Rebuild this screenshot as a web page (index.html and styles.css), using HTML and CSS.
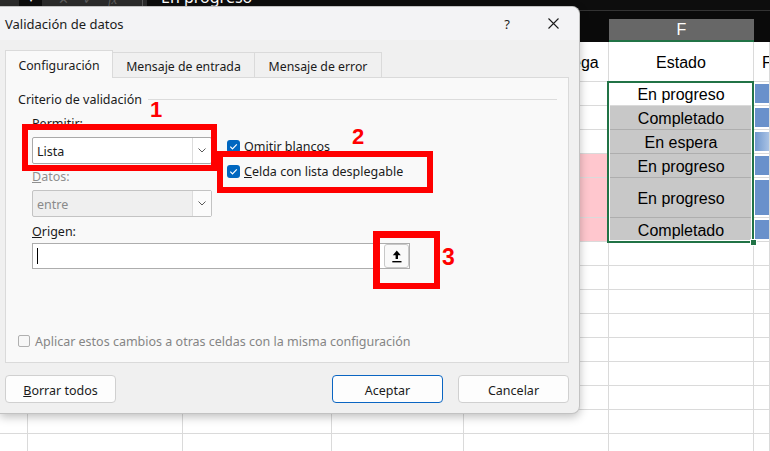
FILE: index.html
```html
<!DOCTYPE html>
<html lang="es">
<head>
<meta charset="utf-8">
<title>Validación de datos</title>
<link rel="stylesheet" href="styles.css">
</head>
<body>
<div class="page">
  <div class="sheet">
    <div class="fbar">
      <div class="fbar-name"><span>▾</span></div>
      <div class="fbar-icons"><span>✕</span><span>✓</span><span class="fx">fx</span></div>
      <div class="fbar-input"><span class="fbar-text">En progreso</span></div>
    </div>
    <div class="colheads">
      <div class="ch"></div><div class="ch"></div><div class="ch"></div><div class="ch"></div><div class="ch"></div>
      <div class="ch ch-sel">F</div>
      <div class="ch"></div>
    </div>
    <div class="grid">
      <div class="c"></div><div class="c"></div><div class="c"></div><div class="c"></div><div class="c">Fecha de entrega</div><div class="c">Estado</div><div class="c gh">Fecha de inicio</div>

      <div class="c"></div><div class="c"></div><div class="c"></div><div class="c"></div><div class="c"></div><div class="c">En progreso</div><div class="c g"><span class="bar"></span></div>
      <div class="c"></div><div class="c"></div><div class="c"></div><div class="c"></div><div class="c"></div><div class="c sel">Completado</div><div class="c g"><span class="bar"></span></div>
      <div class="c"></div><div class="c"></div><div class="c"></div><div class="c"></div><div class="c"></div><div class="c sel">En espera</div><div class="c g"><span class="bar fade"></span></div>
      <div class="c"></div><div class="c"></div><div class="c"></div><div class="c"></div><div class="c pink"></div><div class="c sel">En progreso</div><div class="c g"><span class="bar"></span></div>
      <div class="c"></div><div class="c"></div><div class="c"></div><div class="c"></div><div class="c pink"></div><div class="c sel">En progreso</div><div class="c g"><span class="bar"></span></div>
      <div class="c"></div><div class="c"></div><div class="c"></div><div class="c"></div><div class="c pink"></div><div class="c sel">Completado</div><div class="c g"><span class="bar"></span></div>

      <div class="c"></div><div class="c"></div><div class="c"></div><div class="c"></div><div class="c"></div><div class="c"></div><div class="c"></div>
      <div class="c"></div><div class="c"></div><div class="c"></div><div class="c"></div><div class="c"></div><div class="c"></div><div class="c"></div>
      <div class="c"></div><div class="c"></div><div class="c"></div><div class="c"></div><div class="c"></div><div class="c"></div><div class="c"></div>
      <div class="c"></div><div class="c"></div><div class="c"></div><div class="c"></div><div class="c"></div><div class="c"></div><div class="c"></div>
      <div class="c"></div><div class="c"></div><div class="c"></div><div class="c"></div><div class="c"></div><div class="c"></div><div class="c"></div>
      <div class="c"></div><div class="c"></div><div class="c"></div><div class="c"></div><div class="c"></div><div class="c"></div><div class="c"></div>
      <div class="c"></div><div class="c"></div><div class="c"></div><div class="c"></div><div class="c"></div><div class="c"></div><div class="c"></div>
      <div class="c"></div><div class="c"></div><div class="c"></div><div class="c"></div><div class="c"></div><div class="c"></div><div class="c"></div>
      <div class="c"></div><div class="c"></div><div class="c"></div><div class="c"></div><div class="c"></div><div class="c"></div><div class="c"></div>
    </div>
  </div>

  <div class="selection"><span class="handle"></span></div>

  <div class="dialog">
    <div class="titlebar">
      <span class="title">Validación de datos</span>
      <span class="tb-btn">?</span>
      <span class="tb-btn tb-close">
        <svg width="11" height="11" viewBox="0 0 11 11"><path d="M0.5 0.5 L10.5 10.5 M10.5 0.5 L0.5 10.5" stroke="#1b1b1b" stroke-width="1.1" fill="none"/></svg>
      </span>
    </div>
    <div class="dbody">
      <div class="tabs">
        <div class="tab active">Configuración</div>
        <div class="tab t2">Mensaje de entrada</div>
        <div class="tab t3">Mensaje de error</div>
      </div>
      <div class="panel">
        <div class="legend"><span>Criterio de validación</span><span class="rule"></span></div>
        <div class="form">
          <div class="lbl"><u>P</u>ermitir:</div>
          <div class="combo">
            <span class="val">Lista</span>
            <span class="drop"><svg width="8" height="5" viewBox="0 0 8 5"><path d="M0.5 0.5 L4 4 L7.5 0.5" stroke="#5a5a5a" stroke-width="1" fill="none"/></svg></span>
          </div>
          <div class="lbl dis"><u>D</u>atos:</div>
          <div class="combo dis">
            <span class="val">entre</span>
            <span class="drop"><svg width="8" height="5" viewBox="0 0 8 5"><path d="M0.5 0.5 L4 4 L7.5 0.5" stroke="#5a5a5a" stroke-width="1" fill="none"/></svg></span>
          </div>
          <div class="checks">
            <div class="chk"><span class="box on"><svg width="13" height="13" viewBox="0 0 13 13"><path d="M3.3 6.7 L5.5 8.9 L9.8 4.4" stroke="#fff" stroke-width="1.2" fill="none"/></svg></span><span>Omitir blancos</span></div>
            <div class="chk"><span class="box on"><svg width="13" height="13" viewBox="0 0 13 13"><path d="M3.3 6.7 L5.5 8.9 L9.8 4.4" stroke="#fff" stroke-width="1.2" fill="none"/></svg></span><span><u>C</u>elda con lista desplegable</span></div>
          </div>
        </div>
        <div class="lbl origen"><u>O</u>rigen:</div>
        <div class="refinput">
          <span class="caret"></span>
          <span class="refbtn"><svg width="10" height="13" viewBox="0 0 10 13"><path d="M0.8 5.2 L4.8 0.5 L8.8 5.2 Z" fill="#000"/><rect x="3.6" y="5" width="2.4" height="4" fill="#000"/><rect x="0.3" y="11" width="9.2" height="1.4" fill="#000"/></svg></span>
        </div>
        <div class="apply"><span class="box off"></span><span>Aplicar estos cambios a otras celdas con la misma configuración</span></div>
      </div>
      <div class="btnrow">
        <button class="btn"><u>B</u>orrar todos</button>
        <div class="btngroup">
          <button class="btn primary">Aceptar</button>
          <button class="btn">Cancelar</button>
        </div>
      </div>
    </div>
  </div>

  <div class="mark m1"></div>
  <div class="mark m2"></div>
  <div class="mark m3"></div>
  <span class="num n1">1</span>
  <span class="num n2">2</span>
  <span class="num n3">3</span>
</div>
</body>
</html>
```

FILE: styles.css
```css
* { box-sizing: border-box; margin: 0; padding: 0; }
html, body { width: 770px; height: 451px; overflow: hidden; background: #fff; }
body { font-family: "Liberation Sans", Arial, sans-serif; }
.page { position: relative; width: 770px; height: 451px; overflow: hidden; }

/* formula bar */
.fbar { height: 10px; display: flex; background: #2b2b2b; overflow: hidden; }
.fbar-name { width: 23px; margin-left: 19px; background: #0d0d0d; color: #fff; font-size: 12px; text-align: center; }
.fbar-name span { display: block; margin-top: -9px; }
.fbar-icons { width: 101px; display: flex; gap: 14px; padding-left: 16px; color: #5d5d5d; font-size: 13px; border-right: 1px solid #5a5a5a; margin-right: 4px; }
.fbar-icons span { display: block; margin-top: -8px; }
.fbar-icons .fx { font-style: italic; font-family: "Liberation Serif", serif; }
.fbar-input { flex: 1; background: #0d0d0d; color: #fff; padding-left: 14px; font-size: 16px; line-height: 18px; font-family: "Noto Sans", sans-serif; }
.fbar-text { display: block; margin-top: -12px; }

/* column headers */
.colheads { height: 32px; background: #0a0a0a; border-top: 1px solid #333; display: grid; grid-template-columns: 28px 155px 149px 132px 145px 145px 1fr; }
.ch-sel { margin-top: 8px; background: #676767; border-bottom: 2px solid #217346; color: #fff; font-size: 16px; display: flex; align-items: center; justify-content: center; }

/* grid */
.grid { display: grid; grid-template-columns: 28px 155px 149px 132px 145px 145px 1fr; grid-template-rows: 40px 24px 24px 24px 24px 40px 24px repeat(9, 24px); }
.c { border-right: 1px solid #dadada; border-bottom: 1px solid #dadada; padding-top: 3px; font-size: 16px; color: #000; display: flex; align-items: center; justify-content: center; white-space: nowrap; overflow: hidden; }
.c.gh { justify-content: flex-start; padding-left: 8px; }
.c.sel { background: #c8c8c8; border-bottom-color: #aeaeae; }
.c.pink { background: #ffc7ce; }
.c.g { align-items: stretch; justify-content: stretch; padding: 2px 0 2px 1px; }
.bar { flex: 1; background: #6991cb; }
.bar.fade { background: linear-gradient(90deg, #7098cf 0%, #a9c2e4 100%); }

.selection { position: absolute; left: 607px; top: 81px; width: 147px; height: 162px; border: 2px solid #217346; box-shadow: inset 0 0 0 1px #fff; }
.handle { position: absolute; right: -5px; bottom: -5px; width: 7px; height: 7px; background: #217346; border: 1px solid #fff; }

/* dialog */
.dialog { position: absolute; left: 0; top: 6px; width: 580px; height: 408px; background: #f0f0f0; border: 1px solid #c2c2c2; border-left: none; border-radius: 0 8px 8px 0; box-shadow: 0 3px 10px rgba(0,0,0,0.25); overflow: hidden; font-family: "Noto Sans", sans-serif; font-size: 12.5px; color: #1b1b1b; }
.titlebar { height: 33px; background: #f3f3f5; display: flex; align-items: center; padding-left: 5px; }
.title { flex: 1; font-size: 13px; }
.tb-btn { width: 46px; height: 33px; display: flex; align-items: center; justify-content: center; font-size: 13px; }
.tb-close { margin-right: 3px; }

.dbody { padding: 10px 10px 0 5px; }
.tabs { display: flex; align-items: flex-end; height: 27px; position: relative; z-index: 1; }
.tab { height: 25px; border-top: 1px solid #dadada; border-right: 1px solid #dadada; padding-top: 3px; display: flex; align-items: center; justify-content: center; font-size: 12.3px; }
.tab.active { width: 108px; height: 28px; margin-bottom: -1px; background: #f9f9f9; border-left: 1px solid #dadada; padding-top: 2px; }
.tab.t2 { width: 142px; }
.tab.t3 { width: 127px; }

.panel { height: 286px; background: #f9f9f9; border: 1px solid #dadada; padding: 13px 11px 0 12px; }
.legend { display: flex; align-items: center; height: 16px; }
.rule { flex: 1; height: 1px; background: #dcdcdc; margin-left: 6px; }

.form { margin: 9px 0 0 14px; display: grid; grid-template-columns: 180px 1fr; grid-template-rows: 16px 27px 16px 27px; column-gap: 15px; row-gap: 5px; }
.form > .lbl, .form > .combo { grid-column: 1; }
.lbl { line-height: 16px; }
.lbl.dis { color: #8f8f8f; }
.combo { display: flex; background: #fff; border: 1px solid #a9a9a9; border-radius: 2px; }
.combo .val { flex: 1; display: flex; align-items: center; padding-left: 4px; padding-top: 1px; }
.combo .drop { width: 19px; border-left: 1px solid #dcdcdc; display: flex; align-items: center; justify-content: center; }
.combo.dis { background: #efefef; border-color: #c3c3c3; color: #8a8a8a; }
.combo.dis .drop { background: #fbfbfb; }
.checks { grid-column: 2; grid-row: 2 / span 2; padding-top: 3px; display: flex; flex-direction: column; gap: 12px; }
.chk { display: flex; align-items: center; height: 13px; gap: 4px; }
.box { width: 13px; height: 13px; border-radius: 3px; flex: none; display: block; }
.box.on { background: #0067c0; }
.box svg { display: block; }
.box.off { width: 12px; height: 12px; border: 1px solid #b0b0b0; background: #f7f7f7; border-radius: 2px; }

.origen { margin: 7px 0 0 14px; }
.refinput { margin: 3px 0 0 14px; width: 378px; height: 26px; background: #fff; border: 1px solid #adadad; display: flex; align-items: center; justify-content: space-between; padding: 0 0 0 4px; }
.caret { width: 1px; height: 16px; background: #000; }
.refbtn { width: 25px; height: 24px; border: 1px solid #c8c8c8; border-radius: 3px; background: #f9f9f9; display: flex; align-items: center; justify-content: center; }
.refbtn svg { display: block; }

.apply { margin-top: 64px; display: flex; align-items: center; gap: 5px; height: 16px; color: #858585; }

.btnrow { display: flex; justify-content: space-between; margin-top: 12px; }
.btngroup { display: flex; gap: 15px; }
.btn { width: 111px; height: 28px; border: 1px solid #d0d0d0; border-radius: 4px; background: #fdfdfd; font-family: inherit; font-size: 12.5px; color: #1b1b1b; padding-top: 2px; }
.btn.primary { border-color: #0a65c2; }

/* annotations */
.mark { position: absolute; border: 6px solid #ff0000; }
.m1 { left: 22px; top: 124px; width: 195px; height: 47px; }
.m2 { left: 217px; top: 151px; width: 216px; height: 42px; }
.m3 { left: 373px; top: 231px; width: 67px; height: 58px; border-width: 7px 6px 6px 7px; }
.num { position: absolute; color: #ff0000; font-family: "Liberation Sans", Arial, sans-serif; font-weight: bold; font-size: 22px; line-height: 22px; }
.n1 { left: 150px; top: 99px; }
.n2 { left: 352px; top: 126px; }
.n3 { left: 442px; top: 246px; font-size: 23px; }
```
